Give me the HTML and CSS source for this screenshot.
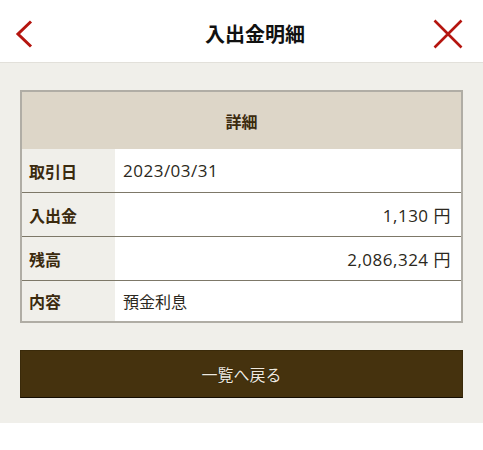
FILE: index.html
```html
<!DOCTYPE html>
<html lang="ja">
<head>
<meta charset="utf-8">
<title>入出金明細</title>
<link rel="stylesheet" href="styles.css">
</head>
<body>
<header class="topbar">
  <a class="back" href="#" aria-label="戻る">
    <svg width="18" height="28" viewBox="0 0 18 28"><path d="M16 1.5 L3 14 L16 26.5" fill="none" stroke="#b5150f" stroke-width="3"/></svg>
  </a>
  <h1 class="title">入出金明細</h1>
  <a class="close" href="#" aria-label="閉じる">
    <svg width="30" height="30" viewBox="0 0 30 30"><path d="M1.5 1.5 L28.5 28.5 M28.5 1.5 L1.5 28.5" fill="none" stroke="#b5150f" stroke-width="2.6"/></svg>
  </a>
</header>
<main class="content">
  <section class="detail">
    <div class="detail-head">詳細</div>
    <div class="row"><div class="label">取引日</div><div class="value num">2023/03/31</div></div>
    <div class="row"><div class="label">入出金</div><div class="value num right">1,130 円</div></div>
    <div class="row"><div class="label">残高</div><div class="value num right">2,086,324 円</div></div>
    <div class="row last"><div class="label">内容</div><div class="value">預金利息</div></div>
  </section>
  <a class="btn" href="#">一覧へ戻る</a>
</main>
</body>
</html>
```

FILE: styles.css
```css
* { box-sizing: border-box; }
html, body { margin: 0; padding: 0; background: #fff; }
body {
  font-family: "Noto Sans CJK JP", "Noto Sans", sans-serif;
  color: #222;
}
.topbar {
  height: 63px;
  padding-top: 5px;
  display: flex;
  align-items: center;
  border-bottom: 1px solid #e2e0da;
  background: #fff;
}
.back { display: block; margin-left: 15px; width: 18px; height: 28px; }
.back svg, .close svg { display: block; }
.title {
  flex: 1;
  margin: 0;
  padding-left: 44px;
  text-align: center;
  font-size: 20px;
  font-weight: 700;
  color: #111;
  line-height: 1;
}
.close { display: block; margin-right: 20px; width: 30px; height: 30px; }
.content {
  background: #f0efea;
  padding: 27px 20px 25px;
  display: flex;
  flex-direction: column;
}
.detail {
  border: 2px solid #b0ada5;
  background: #fff;
}
.detail-head {
  height: 57px;
  background: #ddd6c8;
  display: flex;
  align-items: center;
  justify-content: center;
  font-size: 16px;
  font-weight: 700;
  color: #3b2a0e;
}
.row {
  display: flex;
  height: 44px;
  border-bottom: 1px solid #7d7868;
}
.row.last { height: 40px; border-bottom: none; }
.label {
  width: 93px;
  flex: none;
  background: #f0efea;
  display: flex;
  align-items: center;
  padding-left: 7px;
  font-size: 16px;
  font-weight: 700;
  color: #3b2a0e;
}
.value {
  flex: 1;
  display: flex;
  align-items: center;
  padding: 0 10px 0 8px;
  font-size: 16px;
  color: #2b2820;
}
.value.num {
  font-family: "Open Sans", "Noto Sans CJK JP", sans-serif;
  font-size: 17px;
  letter-spacing: 0.5px;
  padding-bottom: 1px;
}
.value.right { justify-content: flex-end; }
.btn {
  margin-top: 27px;
  height: 48px;
  background: #45320e;
  border: 1px solid #3a2a0a;
  border-bottom-color: #140d02;
  display: flex;
  align-items: center;
  justify-content: center;
  font-size: 16px;
  color: #efe9de;
  text-decoration: none;
  text-shadow: 0 0 1px #000;
}
```
